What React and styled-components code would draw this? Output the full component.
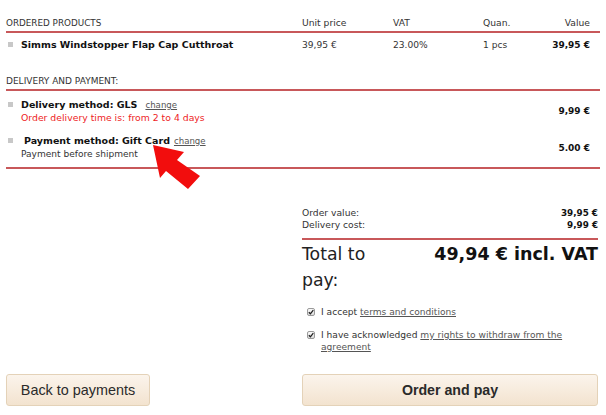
import React from 'react';
import styled, { createGlobalStyle } from 'styled-components';

const GlobalStyle = createGlobalStyle`
  html, body {
    margin: 0;
    padding: 0;
    background: #fff;
  }
  body {
    font-family: "DejaVu Sans", Verdana, sans-serif;
    color: #222;
  }
`;

const red = '#c8585a';

const Page = styled.div`
  position: relative;
  width: 606px;
  height: 415px;
  box-sizing: border-box;
  padding: 17px 6px 0;
  overflow: hidden;
`;

const TableGrid = styled.div`
  display: grid;
  grid-template-columns: 296px 91px 90px 1fr auto;
  align-items: center;
`;

const HeadRow = styled(TableGrid)`
  font-size: 9.2px;
  line-height: 12px;
  color: #333;
  padding-bottom: 2px;
  border-bottom: 2px solid ${red};
`;

const SectionHead = styled.div`
  font-size: 9px;
  line-height: 12px;
  color: #333;
  padding-bottom: 2px;
  border-bottom: 2px solid ${red};
  margin-top: 23px;
`;

const Caps = styled.div`
  font-size: 8.8px;
`;

const RightCell = styled.div`
  text-align: right;
  padding-right: 10px;
`;

const ProductRow = styled(TableGrid)`
  font-size: 9.1px;
  line-height: 14px;
  color: #333;
  padding-top: 5px;
`;

const Name = styled.div`
  display: flex;
  align-items: center;
  font-weight: bold;
  font-size: 9.5px;
  color: #111;
  padding-left: ${(p) => (p.$indent ? 18 : 15)}px;
  position: relative;
  &::before {
    content: '';
    position: absolute;
    left: 2px;
    top: 4px;
    width: 5px;
    height: 5px;
    background: #c8c8c8;
  }
`;

const Price = styled(RightCell)`
  font-weight: bold;
  font-size: 9px;
  color: #111;
`;

const Methods = styled.div`
  padding-top: 7px;
  padding-bottom: 6px;
  border-bottom: 2px solid ${red};
  display: flex;
  flex-direction: column;
  gap: 10px;
`;

const MethodRow = styled.div`
  display: grid;
  grid-template-columns: 1fr auto;
  align-items: center;
`;

const MethodTitle = styled(Name)`
  line-height: 14px;
`;

const ChangeLink = styled.a`
  font-weight: normal;
  font-size: 8.6px;
  color: #555;
  text-decoration: underline;
  margin-left: ${(p) => p.$gap}px;
`;

const Note = styled.div`
  font-size: ${(p) => (p.$warn ? 9.3 : 9.05)}px;
  line-height: ${(p) => (p.$warn ? 12 : 13)}px;
  color: ${(p) => (p.$warn ? '#ee1c25' : '#333')};
  padding-left: 15px;
`;

const Summary = styled.div`
  width: 296px;
  margin: 38px 2px 0 auto;
`;

const Totals = styled.div`
  padding-bottom: 7px;
  border-bottom: 2px solid ${red};
`;

const TotalLine = styled.div`
  display: flex;
  justify-content: space-between;
  font-size: 9.2px;
  line-height: 12px;
  color: #333;
  b {
    color: #111;
    font-size: 8.8px;
  }
`;

const Grand = styled.div`
  display: grid;
  grid-template-columns: 96px 1fr;
  line-height: 26px;
  font-size: 17.3px;
  padding-top: 1px;
`;

const GrandLabel = styled.div`
  color: #222;
`;

const GrandValue = styled.div`
  text-align: right;
  font-weight: bold;
  font-size: 17.5px;
  color: #111;
`;

const Consents = styled.div`
  margin-top: 13px;
  display: flex;
  flex-direction: column;
  gap: 11px;
`;

const Consent = styled.label`
  display: grid;
  grid-template-columns: 8px 1fr;
  column-gap: 6px;
  padding-left: 5px;
  font-size: 9.1px;
  line-height: 12px;
  color: #333;
  a {
    color: #555;
    text-decoration: underline;
  }
`;

const Box = styled.span`
  width: 8px;
  height: 8px;
  margin-top: 2px;
  box-sizing: border-box;
  border: 1px solid #9a9a9a;
  border-radius: 2px;
  background: linear-gradient(#fafafa, #dcdcdc);
  display: flex;
  align-items: center;
  justify-content: center;
`;

const Footer = styled.div`
  position: absolute;
  left: 6px;
  right: 8px;
  top: 374px;
  display: flex;
  justify-content: space-between;
`;

const Button = styled.button`
  height: 32px;
  width: ${(p) => p.$w}px;
  box-sizing: border-box;
  border: 1px solid #e4d2b8;
  border-radius: 3px;
  background: linear-gradient(#fbf4ec, #f3e3cf);
  font-family: "Liberation Sans", Arial, sans-serif;
  font-size: ${(p) => (p.$bold ? 14.2 : 14.4)}px;
  font-weight: ${(p) => (p.$bold ? 'bold' : 'normal')};
  color: #2a2a2a;
  padding: 0;
`;

const Arrow = styled.svg`
  position: absolute;
  left: 0;
  top: 0;
  pointer-events: none;
`;

const Check = () => (
  <svg width="6" height="6" viewBox="0 0 6 6">
    <path d="M0.8 3.2 L2.4 4.8 L5.3 1.2" fill="none" stroke="#222" strokeWidth="1.3" />
  </svg>
);

export default function App() {
  return (
    <>
      <GlobalStyle />
      <Page>
        <HeadRow>
          <Caps>ORDERED PRODUCTS</Caps>
          <div>Unit price</div>
          <div>VAT</div>
          <div>Quan.</div>
          <RightCell>Value</RightCell>
        </HeadRow>
        <ProductRow>
          <Name>Simms Windstopper Flap Cap Cutthroat</Name>
          <div>39,95 €</div>
          <div>23.00%</div>
          <div>1 pcs</div>
          <Price>39,95 €</Price>
        </ProductRow>

        <SectionHead>DELIVERY AND PAYMENT:</SectionHead>
        <Methods>
          <MethodRow>
            <div>
              <MethodTitle>
                Delivery method: GLS
                <ChangeLink $gap={8}>change</ChangeLink>
              </MethodTitle>
              <Note $warn>Order delivery time is: from 2 to 4 days</Note>
            </div>
            <Price>9,99 €</Price>
          </MethodRow>
          <MethodRow>
            <div>
              <MethodTitle $indent>
                Payment method: Gift Card
                <ChangeLink $gap={4}>change</ChangeLink>
              </MethodTitle>
              <Note>Payment before shipment</Note>
            </div>
            <Price>5.00 €</Price>
          </MethodRow>
        </Methods>

        <Summary>
          <Totals>
            <TotalLine>
              <span>Order value:</span>
              <b>39,95 €</b>
            </TotalLine>
            <TotalLine>
              <span>Delivery cost:</span>
              <b>9,99 €</b>
            </TotalLine>
          </Totals>
          <Grand>
            <GrandLabel>Total to pay:</GrandLabel>
            <GrandValue>49,94 € incl. VAT</GrandValue>
          </Grand>
          <Consents>
            <Consent>
              <Box><Check /></Box>
              <span>I accept <a>terms and conditions</a></span>
            </Consent>
            <Consent>
              <Box><Check /></Box>
              <span>I have acknowledged <a>my rights to withdraw from the agreement</a></span>
            </Consent>
          </Consents>
        </Summary>

        <Footer>
          <Button $w={144}>Back to payments</Button>
          <Button $w={296} $bold>Order and pay</Button>
        </Footer>

        <Arrow width="606" height="415">
          <polygon
            points="153,145 184,152 177,160 200,176 188,189 166,171 160,178"
            fill="#f20d0d"
          />
        </Arrow>
      </Page>
    </>
  );
}
